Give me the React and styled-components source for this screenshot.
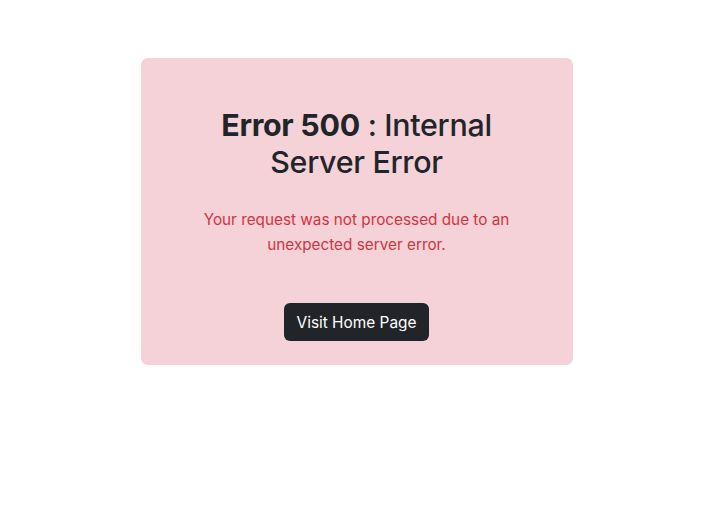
import React from "react";
import styled, { createGlobalStyle } from "styled-components";

const GlobalStyle = createGlobalStyle`
  body {
    margin: 0;
    background: #fff;
    font-family: Inter, "Noto Sans", sans-serif;
    color: #212529;
  }
`;

const Page = styled.div`
  display: flex;
  justify-content: center;
  padding: 58px 0 0 5px;
`;

const Card = styled.div`
  width: 432px;
  box-sizing: border-box;
  padding: 49px 48px 24px;
  background: #f5d2d7;
  border-radius: 7px;
  text-align: center;
`;

const Title = styled.h1`
  margin: 0 0 26px;
  font-size: 30.4px;
  line-height: 37px;
  font-weight: 500;
  letter-spacing: -0.3px;
`;

const Strong = styled.span`
  font-weight: 700;
`;

const Message = styled.p`
  margin: 0 0 46px;
  font-size: 15.3px;
  line-height: 25px;
  color: #d1343f;
`;

const HomeButton = styled.button`
  display: inline-block;
  vertical-align: top;
  height: 38px;
  padding: 0 13px;
  border: none;
  border-radius: 6px;
  background: #212529;
  color: #fff;
  font-family: inherit;
  font-size: 15.4px;
  cursor: pointer;
`;

export default function App() {
  return (
    <>
      <GlobalStyle />
      <Page>
        <Card>
          <Title>
            <Strong>Error 500</Strong> : Internal Server Error
          </Title>
          <Message>
            Your request was not processed due to an unexpected server error.
          </Message>
          <HomeButton>Visit Home Page</HomeButton>
        </Card>
      </Page>
    </>
  );
}
